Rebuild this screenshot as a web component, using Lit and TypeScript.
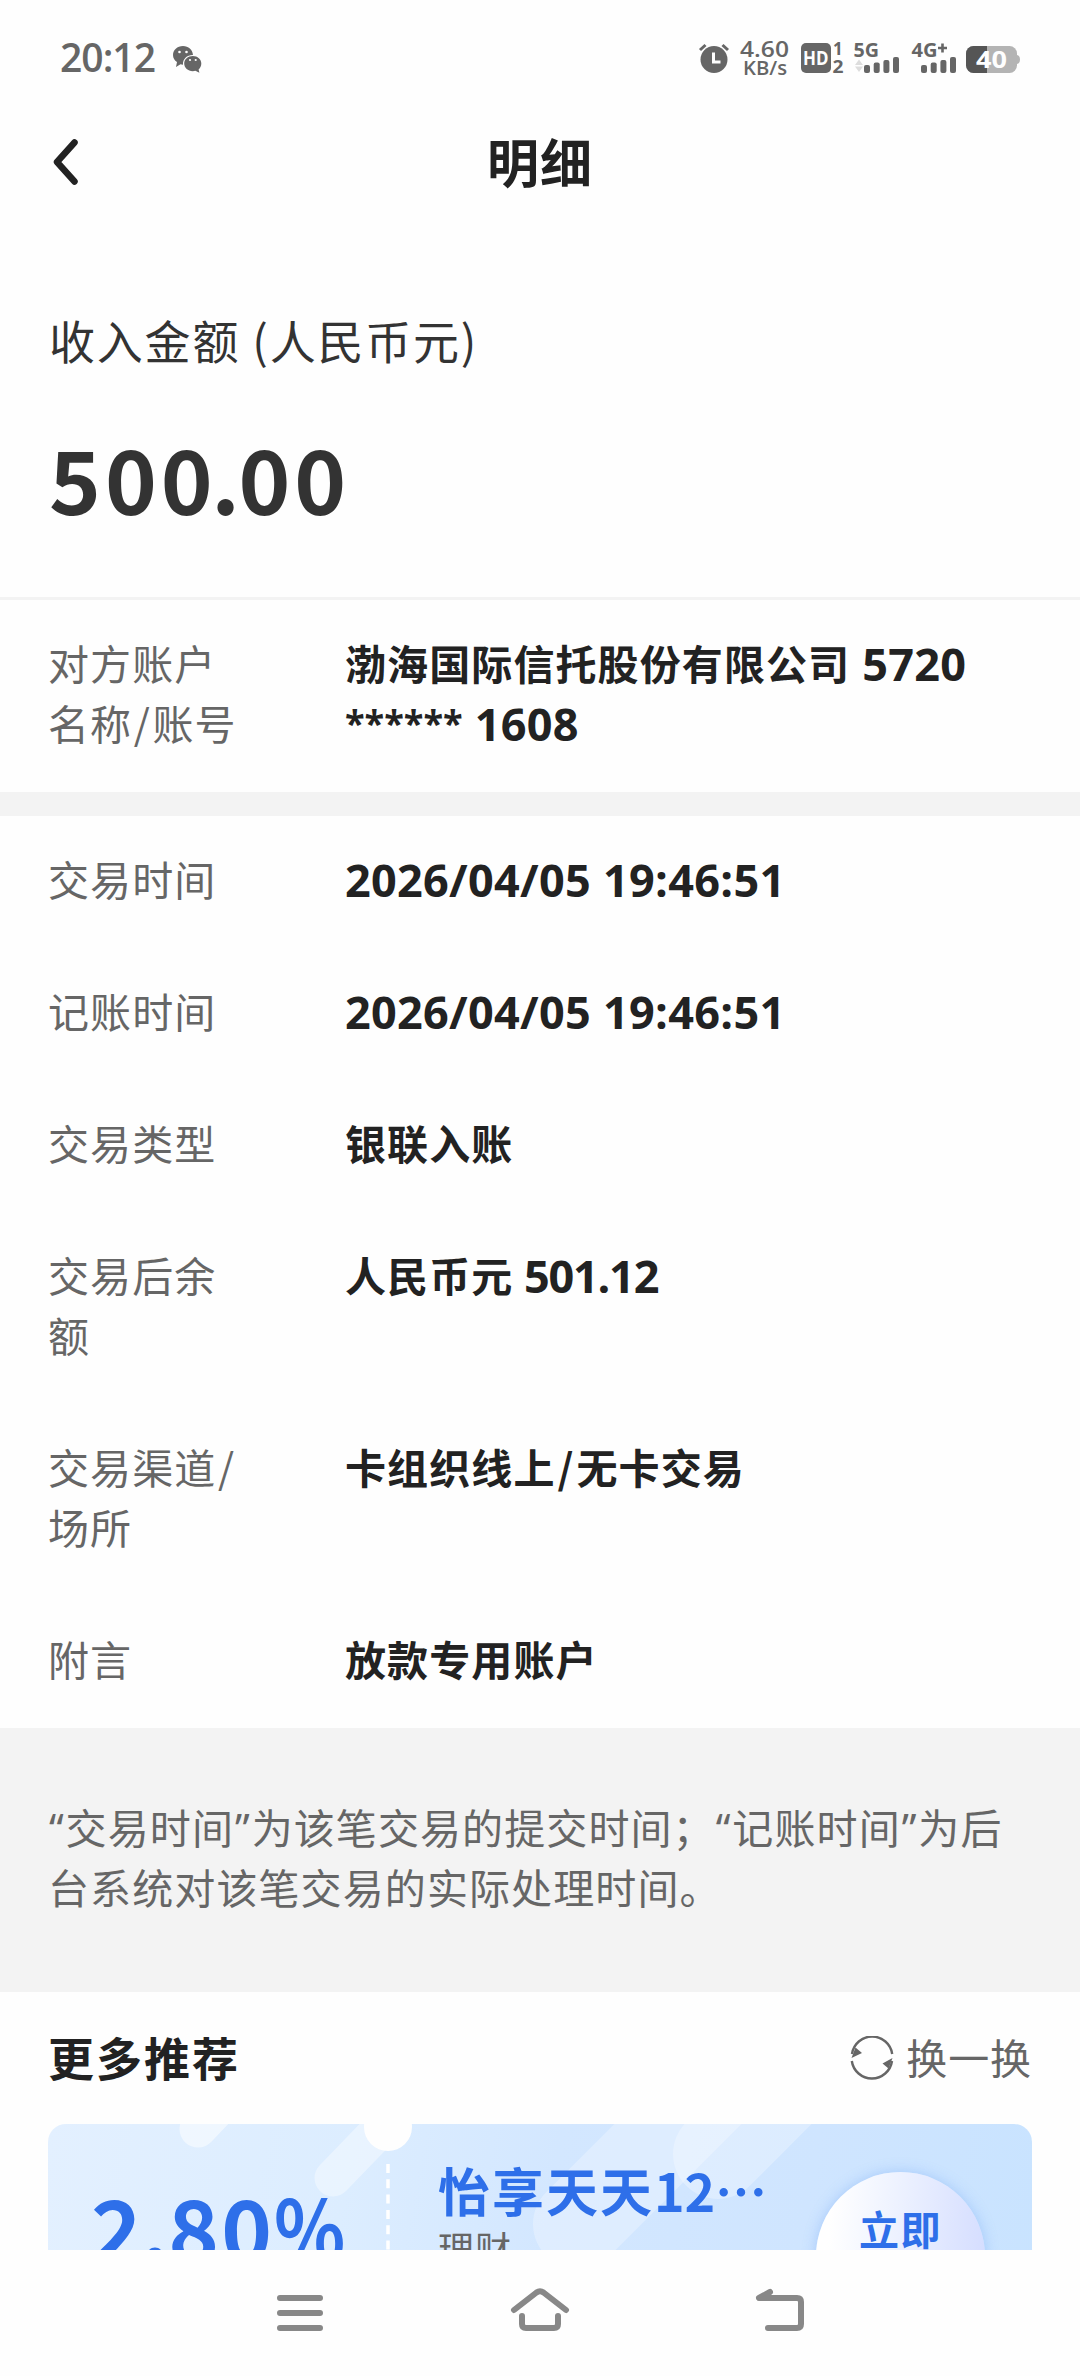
import { LitElement, html, css, svg, TemplateResult } from "lit";
import { customElement } from "lit/decorators.js";

interface Row { label: string; cjk?: string; num?: string; tight?: boolean; }

const ROWS: Row[] = [
  { label: "交易时间", num: "2026/04/05 19:46:51" },
  { label: "记账时间", num: "2026/04/05 19:46:51" },
  { label: "交易类型", cjk: "银联入账" },
  { label: "交易后余额", cjk: "人民币元", num: " 501.12", tight: true },
  { label: "交易渠道/场所", cjk: "卡组织线上/无卡交易" },
  { label: "附言", cjk: "放款专用账户" },
];

const bars = (x: number) => svg`
  <rect x=${x} y="65" width="6" height="8" rx="2"/>
  <rect x=${x + 9.7} y="62.5" width="6" height="10.5" rx="2"/>
  <rect x=${x + 19.4} y="60" width="6" height="13" rx="2"/>
  <rect x=${x + 29} y="57" width="6" height="16" rx="2"/>`;

/** Gives the slash between two CJK words a little room on each side. */
const slashed = (text: string): Array<string | TemplateResult> =>
  text.split(/(\/)/).map((part) => (part === "/" ? html`<span class="slash">/</span>` : part));

@customElement("app-root")
export class AppRoot extends LitElement {
  static styles = css`
    :host {
      display: flex;
      flex-direction: column;
      width: 1080px;
      height: 2376px;
      overflow: hidden;
      background: #fefefe;
      color: #222;
      font-family: "Noto Sans CJK SC", "Noto Sans", sans-serif;
    }
    svg { display: block; }
    .status { height: 108px; flex: none; }
    .status text { font-family: "Open Sans", "Noto Sans", sans-serif; fill: #666; }
    .bar {
      height: 108px; flex: none;
      display: grid; grid-template-columns: 130px 1fr 130px; align-items: center;
    }
    .bar h1 { margin: 0; padding-bottom: 2px; text-align: center; font-size: 52px; line-height: 60px; font-weight: 700; letter-spacing: 1px; }
    .summary { height: 381px; flex: none; border-bottom: 3px solid #f3f3f3; padding-left: 49px; color: #333; }
    .caption { margin-top: 93px; font-size: 46px; line-height: 60px; letter-spacing: 1.8px; }
    .amount { margin-top: 58px; font-size: 88px; line-height: 100px; font-weight: 700; letter-spacing: 4px; }
    .amount .dot { margin: 0 -5.5px; }
    .list { flex: none; }
    .gap { height: 24px; flex: none; background: #f3f3f3; }
    .row { display: flex; padding: 32px 48px 40px; font-size: 41px; line-height: 60px; letter-spacing: 1.1px; }
    .label { width: 200px; margin-right: 97px; flex: none; color: #666; }
    .label .slash { margin: 0 1.5px; }
    .value { font-weight: 700; flex: 1; white-space: nowrap; }
    .value .slash { margin: 0 2px; }
    .num { font-family: "Open Sans", "Noto Sans", sans-serif; font-size: 45px; font-weight: 700; letter-spacing: 0.3px; line-height: 1; white-space: pre; position: relative; top: 1px; }
    .num.tight { letter-spacing: -1.2px; }
    .stars { font-size: 36px; letter-spacing: 0; position: relative; top: -5px; line-height: 1; }
    .notice { flex: none; box-sizing: border-box; height: 264px; padding: 68px 48px 76px; background: #f3f3f3; color: #666; font-size: 41px; line-height: 60px; letter-spacing: 1.1px; white-space: nowrap; }
    .q { font-family: "Noto Sans", sans-serif; line-height: 1; margin: 0 0.9px; }
    .more { height: 132px; flex: none; padding: 0 48px; display: flex; align-items: center; justify-content: space-between; }
    .more h2 { margin: 0; padding-bottom: 5px; font-size: 46px; line-height: 60px; letter-spacing: 2px; font-weight: 700; }
    .swap { display: flex; align-items: center; gap: 12px; color: #666; font-size: 41px; line-height: 60px; letter-spacing: 0.9px; }
    .swap span { padding-bottom: 5px; }
    .offers { height: 126px; flex: none; overflow: hidden; padding: 0 48px; }
    .card {
      position: relative; height: 264px; border-radius: 18px; overflow: hidden;
      background: linear-gradient(100deg, #e3f0ff 0%, #dcedff 30%, #d3e7ff 50%, #cfe5ff 75%, #c8e3ff 100%);
      display: flex; color: #2e6fe9;
    }
    .deco { position: absolute; left: 0; top: 0; }
    .rate { width: 340px; flex: none; padding: 42px 0 0 43px; box-sizing: border-box; font-size: 86px; line-height: 120px; font-weight: 700; letter-spacing: 2.3px; position: relative; white-space: nowrap; }
    .rate .dot { margin: 0 -3px; }
    .rate .pct { display: inline-block; transform: scaleX(0.86); transform-origin: left; }
    .info { flex: 1; padding: 36px 0 0 50px; position: relative; white-space: nowrap; }
    .name { font-size: 52px; line-height: 60px; font-weight: 700; letter-spacing: 2px; }
    .name span { letter-spacing: -0.2px; }
    .kind { font-size: 36px; line-height: 54px; letter-spacing: 1px; color: #666; }
    .buy {
      position: relative; flex: none; width: 169px; height: 169px; margin: 48px 47px 0 0; border-radius: 50%;
      background: linear-gradient(95deg, #fff 10%, #f0f4ff 40%, #d3dcff 100%);
      box-shadow: 0 0 14px rgba(90, 150, 240, 0.35);
      box-sizing: border-box; padding-top: 29px; text-align: center;
      font-size: 40px; line-height: 54px; font-weight: 700; letter-spacing: 1.5px;
    }
    .nav { height: 126px; flex: none; }
  `;

  render() {
    return html`
      <svg class="status" width="1080" height="108" viewBox="0 0 1080 108" fill="#666">
        <text x="60" y="71.500" font-size="39" font-weight="600" textLength="96">20:12</text>
        <path d="M183 46c-5.800 0-10 4-10 9 0 3 1.500 5.500 4 7l-1 5 4.500-2.800 2.500.5c-.6-5.700 4.500-10 10-9.700C192.500 49.500 188.500 46 183 46z"/>
        <path d="M192.800 56c-4.900 0-8.600 3.300-8.600 7.600s3.700 7.600 8.600 7.600l2.600-.4 4 2-.8-3.400c1.700-1.400 2.700-3.500 2.700-5.800 0-4.300-3.700-7.600-8.500-7.600z"/>
        <g fill="#fefefe"><circle cx="179.500" cy="52" r="1.300"/><circle cx="186.500" cy="52" r="1.300"/><circle cx="190" cy="60" r="1.100"/><circle cx="195.700" cy="60" r="1.100"/></g>
        <circle cx="714" cy="59.500" r="13.500"/>
        <path d="M700 50l5.500-5M728 50l-5.500-5" stroke="#666" stroke-width="3"/>
        <path d="M713.500 52.500V62H720.500" stroke="#fefefe" stroke-width="3" fill="none"/>
        <text x="740" y="57" font-size="22" font-weight="600" textLength="49" lengthAdjust="spacingAndGlyphs">4.60</text>
        <text x="743" y="75" font-size="19" font-weight="600" textLength="44" lengthAdjust="spacingAndGlyphs">KB/s</text>
        <rect x="801" y="43" width="30" height="30" rx="5"/>
        <text x="803" y="65" font-size="19" font-weight="700" textLength="25.500" lengthAdjust="spacingAndGlyphs" style="fill:#fefefe">HD</text>
        <text x="833" y="55" font-size="17" font-weight="700">1</text>
        <text x="832.500" y="72.500" font-size="17" font-weight="700" textLength="11" lengthAdjust="spacingAndGlyphs">2</text>
        <text x="853.500" y="57" font-size="19.500" font-weight="700" textLength="25.500" lengthAdjust="spacingAndGlyphs">5G</text>
        <path d="M855 65l4-5.500 4 5.500zM855 66.500l4 5.500 4-5.500z" fill="#ddd"/>
        ${bars(864)}
        <text x="911.500" y="57" font-size="19.500" font-weight="700" textLength="26" lengthAdjust="spacingAndGlyphs">4G</text>
        <path d="M938 48h9M942.500 43.500v9" stroke="#666" stroke-width="2.600"/>
        ${bars(921)}
        <rect x="966" y="46" width="51" height="27" rx="7.500" fill="#b4b4b4"/>
        <path d="M1017 55c4 0 4 9 0 9z" fill="#b4b4b4"/>
        <path d="M987 46H973.500a7.500 7.500 0 0 0-7.500 7.500v12a7.500 7.500 0 0 0 7.500 7.500H987z" fill="#555"/>
        <text x="976" y="68" font-size="24" font-weight="700" textLength="31" lengthAdjust="spacingAndGlyphs" style="fill:#fefefe">40</text>
      </svg>
      <div class="bar">
        <svg width="130" height="60" viewBox="0 0 130 60" fill="none" stroke="#222" stroke-width="6.500" stroke-linecap="round" stroke-linejoin="round"><path d="M74.500 10.500L57 30l17.500 19.500"/></svg>
        <h1>明细</h1>
      </div>
      <section class="summary">
        <div class="caption">收入金额 (人民币元)</div>
        <div class="amount">500<span class="dot">.</span>00</div>
      </section>
      <div class="list">
        <div class="row">
          <div class="label">${slashed("对方账户名称/账号")}</div>
          <div class="value">
            <div>渤海国际信托股份有限公司<span class="num"> 5720</span></div>
            <div><span class="num"><span class="stars">******</span> 1608</span></div>
          </div>
        </div>
      </div>
      <div class="gap"></div>
      <div class="list">
        ${ROWS.map((r) => html`<div class="row">
          <div class="label">${slashed(r.label)}</div>
          <div class="value">${slashed(r.cjk ?? "")}${r.num ? html`<span class=${r.tight ? "num tight" : "num"}>${r.num}</span>` : ""}</div>
        </div>`)}
      </div>
      <div class="notice"><span class="q">“</span>交易时间<span class="q">”</span>为该笔交易的提交时间；<span class="q">“</span>记账时间<span class="q">”</span>为后<br>台系统对该笔交易的实际处理时间。</div>
      <div class="more">
        <h2>更多推荐</h2>
        <div class="swap">
          <svg width="44" height="44" viewBox="0 0 44 44" fill="none" stroke="#666" stroke-width="2.400">
            <path d="M2 18A20.300 20.300 0 0 1 42.200 18M42 25A20.300 20.300 0 0 1 1.800 25"/>
            <path d="M1.500 22L5.500 11.500 12 17zM42.500 22L38.500 32.500 32.500 27.500z" fill="#666" stroke="none"/>
          </svg>
          <span>换一换</span>
        </div>
      </div>
      <div class="offers">
        <div class="card">
          <svg class="deco" width="984" height="264" viewBox="0 0 984 264">
            <g stroke="#fff" stroke-linecap="round" stroke-width="37" fill="none">
              <path d="M150 5L190-37" stroke-opacity=".5"/>
              <path d="M285 54L345-8" stroke-opacity=".38"/>
            </g>
            <g stroke="#fff" stroke-linecap="round" stroke-width="90" stroke-opacity=".28" fill="none">
              <path d="M530 100L730-100"/>
              <path d="M670 30L800-100"/>
            </g>
            <circle cx="340" cy="3" r="24" fill="#fefefe"/>
            <path d="M340 40V264" stroke="#fff" stroke-width="3.500" stroke-dasharray="9 6.300"/>
          </svg>
          <div class="rate">2<span class="dot">.</span>80<span class="pct">%</span></div>
          <div class="info"><div class="name">怡享天天<span>12…</span></div><div class="kind">理财</div></div>
          <div class="buy">立即</div>
        </div>
      </div>
      <svg class="nav" width="1080" height="126" viewBox="0 0 1080 126" fill="none" stroke="#888" stroke-width="6" stroke-linecap="round" stroke-linejoin="round">
        <path d="M280 48H320M280 63H320M280 78H320"/>
        <path d="M514 60L536.500 42.500Q540 40 543.500 42.500L566 60M522 66V74Q522 78 526 78H554Q558 78 558 74V66"/>
        <path d="M770 42L759 48H797Q801 48 801 52V74Q801 78 797 78H768"/>
      </svg>
    `;
  }
}
